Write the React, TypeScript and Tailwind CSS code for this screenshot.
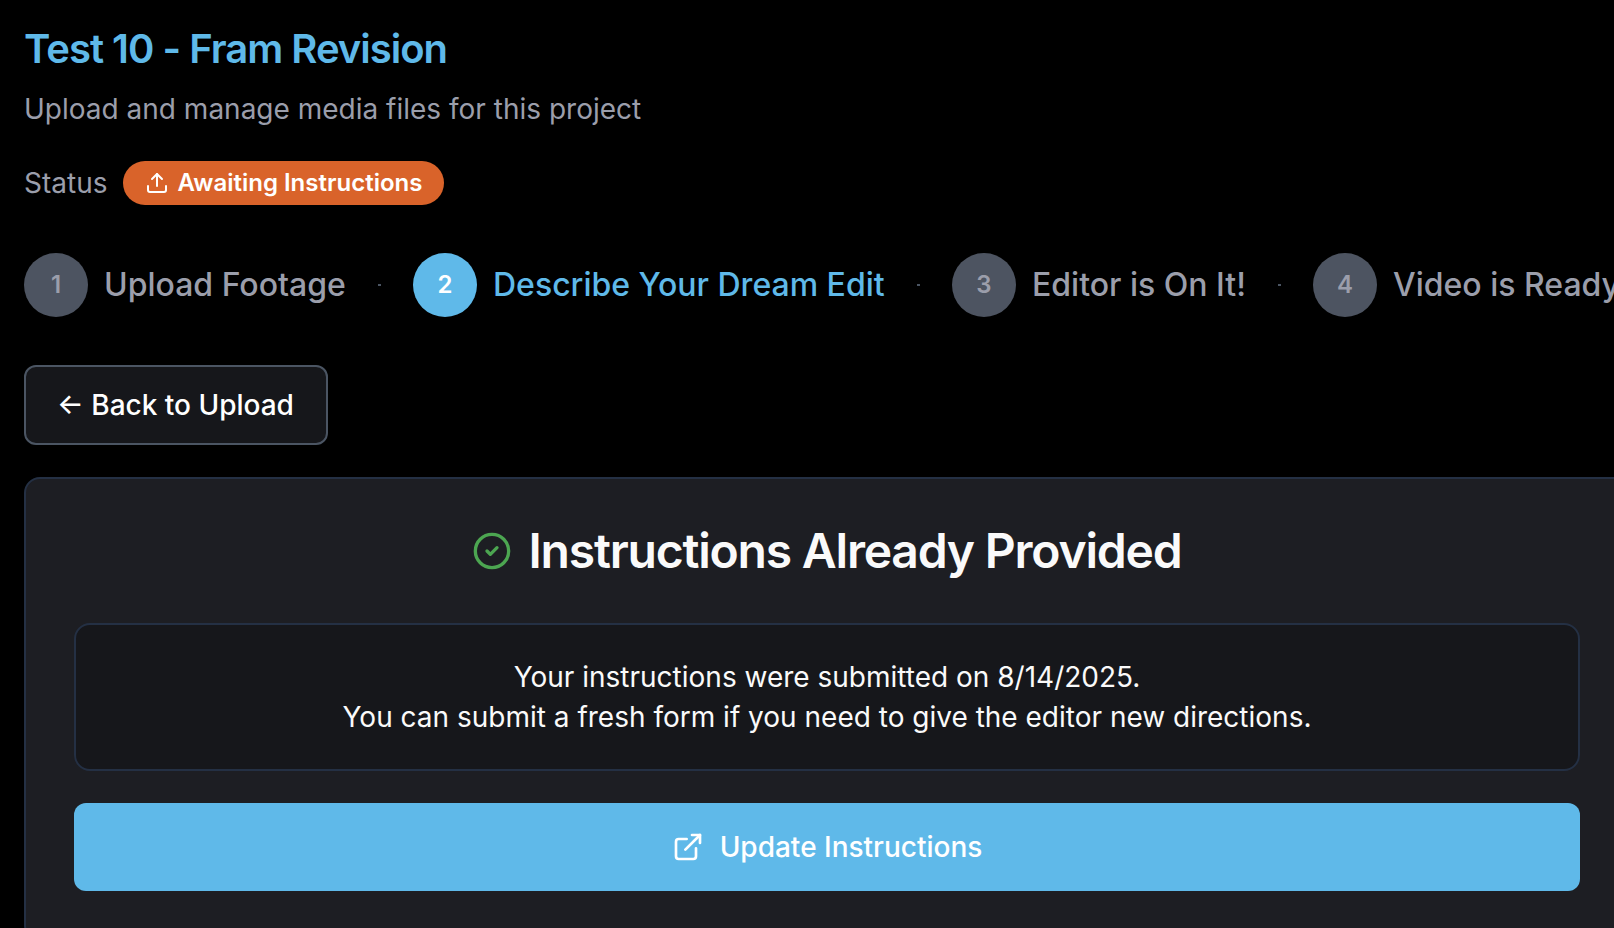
import { ExternalLink, Upload, CircleCheck } from "lucide-react";

const steps = [
  { label: "Upload Footage", width: "w-[322px]", active: false },
  { label: "Describe Your Dream Edit", width: "w-[472px]", active: true },
  { label: "Editor is On It!", width: "w-[294px]", active: false },
  { label: "Video is Ready", width: "w-[320px]", active: false },
];

function Stepper() {
  return (
    <ol className="mt-12 flex h-16 items-center gap-8">
      {steps.map((step, i) => (
        <li key={step.label} className="flex shrink-0 items-center gap-8">
          {i > 0 && <span className="h-0.5 w-[3px] bg-[#4b5563]" />}
          <div className={`flex items-center gap-4 ${step.width}`}>
            <span
              className={`flex size-16 shrink-0 items-center justify-center rounded-full text-2xl font-semibold ${
                step.active ? "bg-[#5fb9e9] text-white" : "bg-[#4d5461] text-[#9b9eab]"
              }`}
            >
              {i + 1}
            </span>
            <span
              className={`text-[32px] leading-10 font-medium whitespace-nowrap ${
                step.active ? "text-[#5fb9e9]" : "text-[#9b9eab]"
              }`}
            >
              {step.label}
            </span>
          </div>
        </li>
      ))}
    </ol>
  );
}

export default function App() {
  return (
    <div className="h-[928px] w-full overflow-hidden bg-black px-6 pt-6 font-['Inter',sans-serif] text-[28px] leading-10">
      <header>
        <h1 className="text-[40px] leading-[50px] font-semibold tracking-tight text-[#5fb9e9]">
          Test 10 - Fram Revision
        </h1>
        <p className="mt-[15px] text-[#9b9eab]">Upload and manage media files for this project</p>
        <div className="mt-8 flex h-11 items-center gap-4">
          <span className="text-[#9b9eab]">Status</span>
          <span className="flex h-11 items-center gap-2 rounded-full bg-[#d9632a] px-[22px] text-2xl font-semibold text-white">
            <Upload className="size-6" />
            Awaiting Instructions
          </span>
        </div>
      </header>
      <Stepper />
      <button className="mt-12 flex h-20 w-[304px] items-center justify-center rounded-xl border-2 border-[#4b5563] bg-[#16171b] pr-px font-medium whitespace-nowrap text-white">
        ← Back to Upload
      </button>
      <section className="mt-8 w-[1606px] rounded-2xl border-2 border-[#243044] bg-[#1d1e23] p-12">
        <div className="flex h-12 items-center justify-center gap-4">
          <CircleCheck className="size-10 text-[#4ca651]" />
          <h2 className="text-5xl font-semibold tracking-tight text-[#fafafa]">Instructions Already Provided</h2>
        </div>
        <div className="mt-12 rounded-2xl border-2 border-[#243044] bg-[#16171b] p-8 text-center text-[#fafafa]">
          <p>Your instructions were submitted on 8/14/2025.</p>
          <p>You can submit a fresh form if you need to give the editor new directions.</p>
        </div>
        <button className="mt-8 flex h-[88px] w-full items-center justify-center gap-4 rounded-xl bg-[#5fb9e9] font-medium text-white">
          <ExternalLink className="size-8" />
          Update Instructions
        </button>
      </section>
    </div>
  );
}
